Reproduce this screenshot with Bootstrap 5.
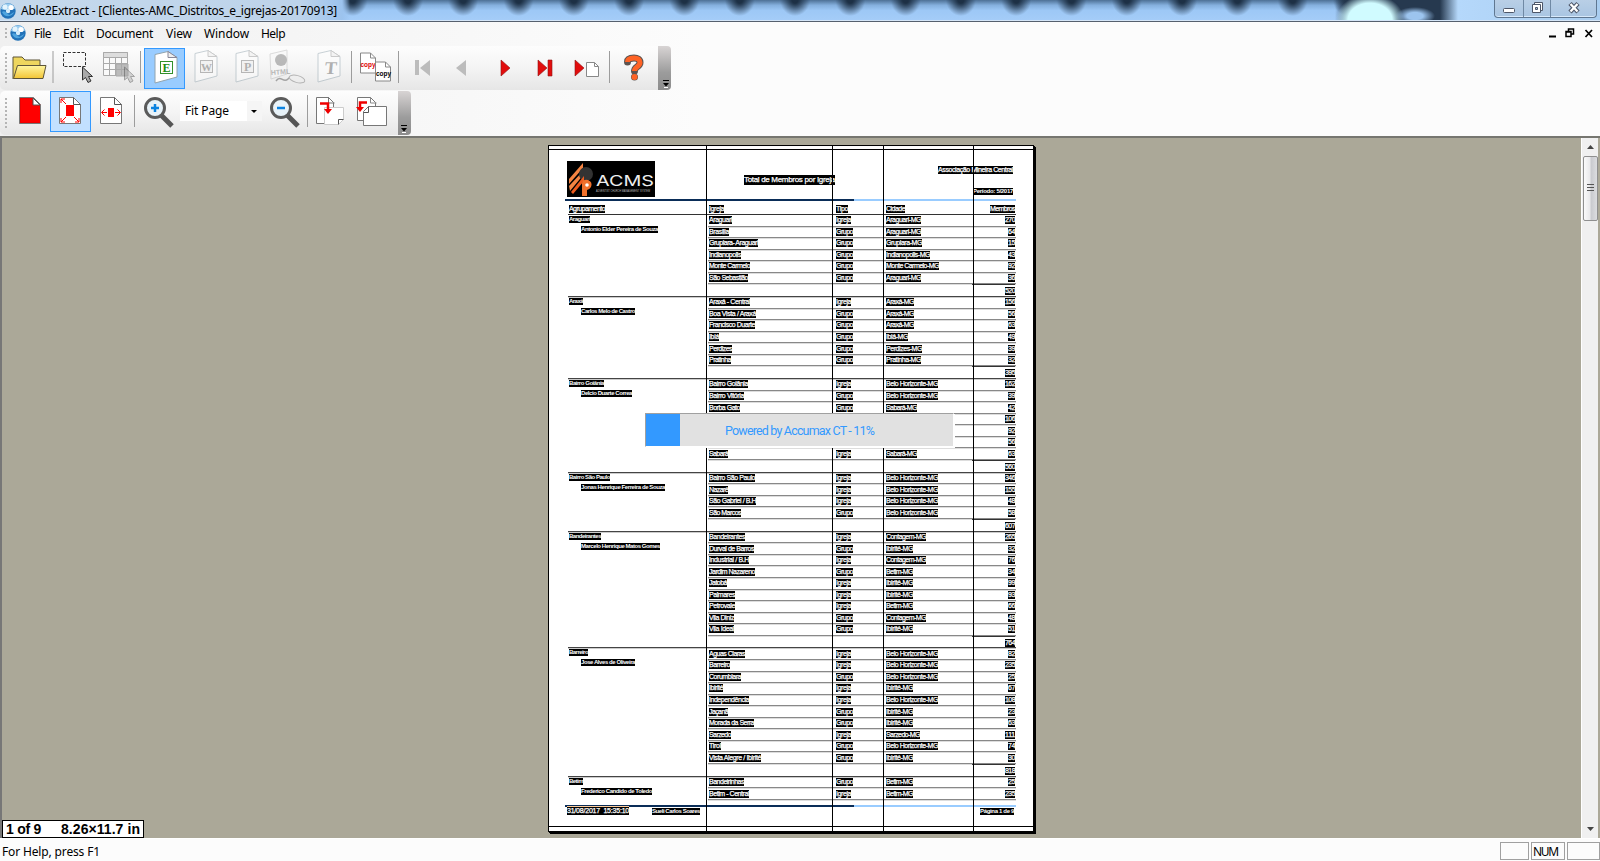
<!DOCTYPE html>
<html lang="en">
<head>
<meta charset="utf-8">
<title>Able2Extract</title>
<link href="https://cdn.jsdelivr.net/npm/bootstrap@5.3.0/dist/css/bootstrap.min.css" rel="stylesheet">
<style>
html,body{height:100%;overflow:hidden}
body{font-family:"Noto Sans","Open Sans",sans-serif;font-size:12px;line-height:1;color:#000;background:#fcfcfc}
[data-w]{display:inline-block;white-space:pre}
svg{display:block;flex:none}
.titlebar{height:22px;border-bottom:1px solid #56606e;box-shadow:inset 0 -1px #d5e6f8;
 background:
 radial-gradient(ellipse 20px 9px at 1415px 16px,#9cc4ee 40%,transparent 100%),
 radial-gradient(ellipse 34px 26px at 1370px 20px,#d0fbff 65%,transparent 100%),
 linear-gradient(90deg,#c5d9ec 0,#bdd3ea 300px,#9cc3ee 342px,transparent 350px,transparent 1335px,#26394f 1350px,#26394f 1440px,#b5d8fb 1458px,#a9cdf0 1600px),
 radial-gradient(ellipse 15px 16px at 50% 0,#1d3045 20%,#1d304500 100%) 325px 0/55.3px 20px repeat-x,
 linear-gradient(#4d7095,#85b0de 25%,#9dc8f6 50%,#a5cdf8)}
.winbtns{width:103px;height:18px;border:1px solid #5f7791;border-top:0;border-radius:0 0 4px 4px;box-shadow:inset 0 -1px #d8e9fa;background:linear-gradient(#b9cfe6,#a9c5e2)}
.winbtns>div+div{border-left:1px solid #7089a4}
.menubar{height:24px}
.chrome-bg{background:linear-gradient(90deg,#f0f0f0,#fcfcfc 700px)}
.grip{width:2px;height:30px;background:repeating-linear-gradient(#b5b5b5 0 2px,transparent 2px 4px)}
.tbar{height:44px;background:linear-gradient(#fdfdfd,#f4f4f4 50%,#e6e6e6);border-radius:5px 0 0 5px}
.tail{width:13px;height:44px;background:linear-gradient(#d8d4d4,#9c9c9c 60%,#8c8c8c);border-radius:0 4px 4px 0}
.tbtn{width:41px;height:41px}
.on1{background:#99ccff;border:1px solid #3399ff}
.on2{background:#c2e0ff;border:1px solid #3399ff}
.combo{width:82px;height:20px;background:#fff}
.combo .drop{width:15px;height:20px;background:#f5f5f5}
.work{height:702px;background:#aba898;border-top:2px solid #767670;border-left:2px solid #777}
.vscroll{width:17px;background:#f0f0f0;border-left:1px solid #fff;margin-right:2px}
.thumb{width:15px;height:65px;border:1px solid #8f8f8f;border-radius:2px;background:linear-gradient(90deg,#fafafa,#e9e9eb 45%,#c9cacf 55%,#dcdde0)}
.pageinfo{left:0;bottom:0;width:142px;height:18px;background:#fff;border:1px solid #000;font:bold 14px/16px "Liberation Sans",sans-serif;padding:0 3px 0 3px}
.sheet{width:486px;height:687px;margin:7px 0 0 546px;background:#fff;border:1px solid #000;box-shadow:1px 1px #000,2px 2px #000;font-family:"Liberation Sans",sans-serif;font-size:6px}
.guide{top:0;width:1px;height:685px;background:#000}
.hl{background:#000;color:#fff;font-size:7px;line-height:8px;height:8px;overflow:hidden;vertical-align:top;-webkit-text-stroke:.25px #fff}
.hb{font-weight:bold;font-size:6px;line-height:7px;height:7px;-webkit-text-stroke:0}
.sheet-in{border-top:1px solid #000;border-bottom:1px solid #000;height:678px;margin-top:3px}
.hdr{height:49px}
.band{height:2px;width:451px;margin-left:16px;background:linear-gradient(90deg,#0a2d58 289px,#99ccff 289px)}
.cols{display:grid;grid-template-columns:140px 127px 50px 90px 39px;padding-left:1px;margin-left:19px;width:448px;height:14px;padding-top:4px;border-bottom:1px solid #333}
.sec{border-bottom:1px solid #444;box-shadow:0 1px #ccc;width:448px;margin-left:19px;display:grid;grid-template-columns:140px 308px}
.rw{display:grid;grid-template-columns:127px 50px 89px 40px;padding-left:1px;height:11.55px;border-bottom:1px solid #888;box-shadow:0 1px #ddd;padding-top:1.300px}
.tot{height:11.8px;width:43px;margin-left:264px;border-top:1px solid #333;padding:2px 0 0}
.prog{left:643px;top:275px;width:309px;height:34px;background:#e1e1e1;border:1px solid #a0a0a0;border-right-color:#fff;border-bottom-color:#fff;box-shadow:1px 1px #fff}
.prog .bar{width:34px;background:#3399ff}
.prog .cap{color:#3399ff;font:12.5px Roboto,sans-serif}
.status{height:21px;padding-top:3px;border-top:1px solid #fff}
.pane{height:18px;border:1px solid #a0a0a0;margin-right:2px}
</style>
</head>
<body>
<div class="titlebar d-flex align-items-start">
 <svg width="16" height="16" style="margin-top:3px" viewBox="0 0 16 16"><use href="#globe"/></svg>
 <span data-w="316" style="margin:5px 0 0 5px">Able2Extract - [Clientes-AMC_Distritos_e_igrejas-20170913]</span>
 <div class="winbtns d-flex ms-auto" style="margin-right:3px">
  <div class="d-flex justify-content-center" style="width:28px"><svg width="12" height="16"><rect x=".5" y="8.500" width="11" height="4" rx="1" fill="#fff" stroke="#4d5668"/></svg></div>
  <div class="d-flex justify-content-center" style="width:27px"><svg width="13" height="16"><path d="M3.500 2.500h8v8h-8z" fill="#fff" stroke="#4d5668"/><path d="M1.500 4.500h8v8h-8z" fill="#fff" stroke="#4d5668"/><path d="M4.500 7.500h2v2h-2z" fill="#a9c5e2" stroke="#4d5668"/></svg></div>
  <div class="d-flex justify-content-center flex-fill"><svg width="12" height="16"><path d="M2 3.500l8 8.500M10 3.500L2 12" stroke="#4d5668" stroke-width="4.500"/><path d="M2.500 4l7 7.500M9.500 4l-7 7.500" stroke="#fff" stroke-width="2.300"/></svg></div>
 </div>
</div>
<div class="chrome-bg">
<nav class="menubar d-flex align-items-center">
 <div class="grip" style="height:12px;margin:0 3px 0 5px"></div>
 <svg width="16" height="16" viewBox="0 0 16 16" style="margin-top:-3px"><defs><g id="globe"><circle cx="8" cy="8" r="7.700" fill="#2272b8"/><path d="M1 6C2 2 5 .5 8 .5s6 1.500 7 5C12 7 5 8 1 6z" fill="#9bcdf0"/><circle cx="5" cy="4" r="2.500" fill="#e4f4fd"/><circle cx="11" cy="4.500" r="2.600" fill="#fff"/><circle cx="8" cy="8" r="2.200" fill="#d4ecfa"/><path d="M2 9c2-2 4 0 6 2s4-1 6-2c-1 5-10 6-12 0" fill="#4fa5df"/></g></defs><use href="#globe"/></svg>
 <span data-w="17" style="margin-left:8px">File</span><span data-w="21" style="margin-left:12px">Edit</span><span data-w="57" style="margin-left:12px">Document</span><span data-w="26" style="margin-left:13px">View</span><span data-w="45" style="margin-left:12px">Window</span><span data-w="24" style="margin-left:12px">Help</span>
 <svg width="46" height="12" class="ms-auto" style="margin:-3px 6px 0 0"><path d="M1 9.500h7" stroke="#000" stroke-width="2"/><path d="M18 4.500h5v5h-5zM18 5h5M20.500 4V2h5v5H23M20 2h6" fill="none" stroke="#000" stroke-width="1.500"/><path d="M37.500 3l6.500 7m0-7l-6.500 7" stroke="#000" stroke-width="1.700"/></svg>
</nav>
<div class="d-flex mb-1" style="height:44px">
 <div class="tbar d-flex align-items-center" style="width:658px">
  <div class="grip" style="margin-left:5px"></div>
  <svg width="146" height="40" style="margin-left:5px" viewBox="12 48 146 40">
   <defs><linearGradient id="y" x2="0" y2="1"><stop stop-color="#fff6a0"/><stop offset="1" stop-color="#f3c535"/></linearGradient></defs>
   <path d="M13 79V57h9l3 3h15v5" fill="#eed65e" stroke="#5c5439"/><path d="M13.500 78.500l4-13H46l-3 13z" fill="url(#y)" stroke="#5c5439"/>
   <path d="M53 51v32" stroke="#9c9c9c"/>
   <rect x="63.500" y="52.500" width="22" height="14" fill="none" stroke="#333" stroke-dasharray="3 1.500"/>
   <path id="cur" d="M82.500 67v13l3-2.500 2.500 5 3-1.500-2.500-4.500h4z" fill="#a9a9a9" stroke="#333"/>
   <g fill="#fafafa" stroke="#aaa"><path d="M103.500 52.500h24v23h-24z"/><path d="M103.500 52.500h24v5h-24z" fill="#ddd"/><path d="M116 64h12v12h-12z" fill="#bbb"/><path d="M103 63.500h24M103 69.500h24M109.500 58v17M115.500 58v17M121.500 58v17"/></g>
   <use href="#cur" x="42" opacity=".4"/><path d="M140.500 51v32" stroke="#9c9c9c"/>
  </svg>
  <div class="tbtn on1" style="margin-left:-14px"><svg width="39" height="39" viewBox="145 48 39 39"><path id="doc" d="M155 53.500l13-3 9 6v19.500l-22 6z" fill="#fff" stroke="#92a4ae"/><path d="M168 50.500v6h9z" fill="#eee" stroke="#889"/><rect x="160.500" y="60.500" width="12" height="12" fill="#fff" stroke="#33902a"/><text x="162.500" y="71" font-family="Liberation Serif" font-size="12" font-weight="bold" fill="#208c10">E</text></svg></div>
  <svg width="170" height="40" viewBox="185 48 170 40">
   <g opacity=".48"><g transform="translate(40 0)"><use href="#doc"/><path d="M168 50.500v6h9z" fill="#eee" stroke="#999"/></g><rect x="200.500" y="60.500" width="12" height="12" fill="#eee" stroke="#777"/><text x="201" y="71" font-family="Liberation Serif" font-size="11" font-weight="bold" fill="#666">W</text>
   <g transform="translate(81 0)"><use href="#doc"/><path d="M168 50.500v6h9z" fill="#eee" stroke="#999"/></g><rect x="241.500" y="60.500" width="12" height="12" fill="#eee" stroke="#777"/><text x="244" y="71" font-family="Liberation Serif" font-size="12" font-weight="bold" fill="#666">P</text>
   <path d="M270 54l17-4v24l-16 5z" fill="#f8f8f8" stroke="#bbb"/><circle cx="281" cy="60" r="6" fill="#777"/><text x="271" y="75" font-family="Liberation Sans" font-size="7" font-weight="bold" fill="#777" transform="rotate(-4 271 75)">HTML</text><path d="M276 81c5-7 7 3 12-2s6-3 5 0" fill="none" stroke="#555" stroke-width="1.500"/><ellipse cx="297" cy="79" rx="8" ry="3.500" fill="#eee" stroke="#777" transform="rotate(15 297 79)"/>
   <g transform="translate(163 0)"><use href="#doc"/><path d="M168 50.500v6h9z" fill="#eee" stroke="#999"/></g><text x="324" y="74" font-family="Liberation Serif" font-size="18" font-weight="bold" fill="#666" transform="skewX(-6) translate(8 0)">T</text></g>
   <path d="M351.500 51v32" stroke="#9c9c9c"/>
  </svg>
  <svg width="303" height="40" viewBox="355 48 303 40">
   <path d="M360.500 53v20h15V58l-5-5z" fill="#fff" stroke="#888"/><path d="M370.500 53v5h5" fill="none" stroke="#888"/><text x="360.500" y="67" font-family="Liberation Sans" font-size="8" font-weight="bold" fill="#d00" textLength="15" lengthAdjust="spacingAndGlyphs">copy</text>
   <path d="M375.500 62v19h15V67l-5-5z" fill="#fff" stroke="#888"/><path d="M385.500 62v5h5" fill="none" stroke="#888"/><text x="376" y="76" font-family="Liberation Sans" font-size="8" font-weight="bold" textLength="15" lengthAdjust="spacingAndGlyphs">copy</text>
   <path d="M398.500 51v32M609.500 51v32" stroke="#9c9c9c"/>
   <path d="M415 60h4v15h-4zM430 60v16l-10-8z" fill="#bcbcbc"/><path d="M466 60v16l-10-8z" fill="#bcbcbc"/>
   <g fill="#e20d0d" stroke="#8d1414" stroke-width=".6"><path d="M501 60v16l9-8zM538 60v16l9-8zM548 60h4v16h-4zM575 60v16l9-8z"/></g>
   <path d="M586.500 62.500h8l4 4v10h-12z" fill="#fff" stroke="#888"/><path d="M594.500 62.500v4h4" fill="none" stroke="#888"/>
   <path d="M627.500 62c0-3 3-4 6.500-4s6 1.500 6 4.500c0 4.500-5.500 4-5.500 8.500M634.500 77v.1" fill="none" stroke="#5c5350" stroke-width="7" stroke-linecap="round"/><path d="M627.500 62c0-3 3-4 6.500-4s6 1.500 6 4.500c0 4.500-5.500 4-5.500 8.500" fill="none" stroke="#ff6325" stroke-width="5"/><circle cx="634.500" cy="77" r="3" fill="#ff6325"/>
  </svg>
 </div>
 <div class="tail"><svg width="13" height="44"><path d="M5 34.500h6" stroke="#000"/><path d="M5 37h6l-3 3.500z"/><path d="M6 41.500h4" stroke="#fff"/></svg></div>
</div>
<div class="d-flex" style="height:46px;margin-top:-4px;padding-top:1px">
 <div class="tbar d-flex align-items-start" style="width:398px">
  <div class="grip" style="margin:7px 0 0 5px"></div>
  <svg width="43" height="41" viewBox="7 92 43 41"><path d="M19.500 98.500h14l7 7v19h-21z" fill="#e00" stroke="#777"/><path d="M21 100h11v6h8v17H21z" fill="#f00"/><path d="M33 99v7h7z" fill="#fff" stroke="#555"/></svg>
  <div class="tbtn on2"><svg width="39" height="39" viewBox="51 93 39 39"><path d="M59.500 98.500h14l7 7v19h-21z" fill="#fff" stroke="#777"/><path d="M73.500 98.500v7h7" fill="none" stroke="#555"/><path d="M66 106h8v11h-8z" fill="#f00"/><path d="M66 105l-5-5m0 4v-4h4M74 118l5 5m0-4v4h-4M66 118l-5 5m0-4v4h4" stroke="#f00" fill="none"/></svg></div>
  <svg width="89" height="41" viewBox="91 92 89 41"><path d="M100.500 98.500h14l7 7v19h-21z" fill="#fff" stroke="#777"/><path d="M114.500 98.500v7h7" fill="none" stroke="#555"/><path d="M108 109h6v9h-6z" fill="#f00"/><path d="M107 113.500h-5m2.500-3l-3 3 3 3M115 113.500h5m-2.500-3l3 3-3 3" stroke="#f00" fill="none"/><path d="M134.500 96v32" stroke="#9c9c9c"/><g id="mag"><path d="M161 116l11 11" stroke="#555" stroke-width="5"/><circle cx="155" cy="109" r="9.500" fill="#e8f2f8" stroke="#5a5a5a" stroke-width="3"/><path d="M151 109h8" stroke="#0a82e0" stroke-width="2.500"/></g><path d="M155 105v8" stroke="#0a82e0" stroke-width="2.500"/></svg>
  <div class="combo d-flex align-items-center" style="margin-top:10px"><span data-w="44" style="margin-left:5px">Fit Page</span><div class="drop ms-auto"><svg width="15" height="20"><path d="M4 9h6l-3 3z"/></svg></div></div>
  <svg width="134" height="41" viewBox="262 92 134 41"><use href="#mag" x="126"/><path d="M307.500 96v32" stroke="#9c9c9c"/>
   <path d="M316.500 98.500h12l5 5v21h-17z" fill="#fff" stroke="#777"/><path d="M328.500 98v6h6" fill="none" stroke="#777"/><path d="M324.500 108.500h19v12l-5 5h-14z" fill="#fff" stroke="#ccc"/><path d="M338.500 125.500v-5h5" fill="none" stroke="#555"/><path d="M320 104.500h8v6" stroke="#e00" stroke-width="2.500" fill="none"/><path d="M324 110h8l-4 5z" fill="#e00"/>
   <path d="M357.500 98.500h13l5 5v18h-18z" fill="#fff" stroke="#777"/><path d="M370.500 98v6h6" fill="none" stroke="#888"/><path d="M368.500 107.500h18v19h-23v-14z" fill="#fff" stroke="#777"/><path d="M368.500 107.500v6h-5" fill="none" stroke="#555"/><path d="M367 103.500h-7v6" stroke="#e00" stroke-width="2.500" fill="none"/><path d="M356 108h8l-4 5z" fill="#e00"/></svg>
 </div>
 <div class="tail"><svg width="13" height="44"><path d="M3 34.500h6" stroke="#000"/><path d="M3 37h6l-3 3.500z"/><path d="M4 41.500h4" stroke="#fff"/></svg></div>
</div>
</div>
<main class="work d-flex position-relative">
 <div class="sheet position-relative">
  <div class="sheet-in">
   <div class="hdr d-flex align-items-start">
    <svg width="88" height="36" style="margin:11px 0 0 18px" viewBox="0 0 88 36"><path d="M0 0h88v36H0z"/><path d="M2 18L16 2v5L2 23zM2 25L17 9v4L3 30z" fill="#f58442"/><circle cx="19" cy="13" r="7" fill="#333"/><path d="M4 31L17 15v5L6 33z" fill="#ee5b1e"/><path d="M15 35V22q1-4 6-3 5 2 3 7-2 3-4 3v6z" fill="#f0712c"/><circle cx="20" cy="24" r="1.800" fill="#fff"/><text x="29" y="25" font-family="Inter" font-size="15" fill="#eee" textLength="58" lengthAdjust="spacingAndGlyphs">ACMS</text><text x="29" y="30.500" font-family="Liberation Sans" font-size="2.800" fill="#bbb" textLength="54" lengthAdjust="spacingAndGlyphs">ADVENTIST CHURCH MANAGEMENT SYSTEM</text></svg>
    <span class="hl" data-w="91" style="margin:25px 0 0 89px;font-size:8px;line-height:10px;height:10px">Total de Membros por Igreja</span>
    <div class="text-end ms-auto" style="margin:16px 20px 0 0"><span class="hl d-block ms-auto" data-w="75">Associação Mineira Central</span><span class="hl hb ms-auto" data-w="40" style="margin-top:14px">Período: 5/2017</span></div>
   </div>
   <div class="band"></div>
   <div class="cols" id="heads"></div>
   <div id="secs"></div>
   <div class="band" style="margin-top:5px"></div>
   <div class="d-flex" style="margin:0 19px 0 18px"><span class="hl" data-w="62" style="box-shadow:0 -1px #ffcc99">31/08/2017  15:35:10</span><span class="hl hb" data-w="48" style="margin:1px 0 0 23px">Sueli Carlos Soares</span><span class="hl hb ms-auto" data-w="34" style="margin-top:1px">Página 1 de 9</span></div>
  </div>
  <div class="guide position-absolute" style="left:157px"></div><div class="guide position-absolute" style="left:283px"></div><div class="guide position-absolute" style="left:334px"></div><div class="guide position-absolute" style="left:424px"></div>
 </div>
 <div class="prog position-absolute d-flex"><div class="bar"></div><div class="cap flex-fill d-flex align-items-center" style="padding-left:45px"><span data-w="149">Powered by Accumax CT - 11%</span></div></div>
 <div class="pageinfo position-absolute d-flex justify-content-between"><span data-w="35">1 of 9</span><span data-w="79">8.26×11.7 in</span></div>
 <div class="vscroll ms-auto d-flex flex-column align-items-center">
  <svg width="15" height="18"><path d="M4 11l3.500-4 3.500 4z" fill="#444"/></svg>
  <div class="thumb"><svg width="13" height="63"><path d="M3 27.500h7M3 30.500h7M3 33.500h7" stroke="#555"/></svg></div>
  <svg width="15" height="18" class="mt-auto"><path d="M4 7h7l-3.500 4z" fill="#444"/></svg>
 </div>
</main>
<footer class="status d-flex"><span data-w="98" style="margin:4px 0 0 2px">For Help, press F1</span>
 <div class="pane ms-auto" style="width:29px"></div><div class="pane" style="width:34px;padding:3px 0 0 1px"><span data-w="25">NUM</span></div><div class="pane me-0" style="width:33px"></div></footer>
<script src="https://cdn.jsdelivr.net/npm/bootstrap@5.3.0/dist/js/bootstrap.bundle.min.js"></script>
<script>
// Highlight widths, in pixels, of the city column
const cityW={Araguari:35,Grupiara:36,'Indianopolis':44,'Monte Carmelo':53,'Araxá':28,'Ibiá':22,Perdizes:36,Pratinha:35,'Belo Horizonte':52,'Sabará':31,Contagem:40,'Ibirité':27,Betim:27,Sarzedo:34};
// group, width, pastor, width, rows (church:width:type:city:members), total
const data=[
['Araguari',21,'Antonio Elder Pereira de Souza',77,'Araguari:23:I:Araguari:270|Brasilia:20:G:Araguari:64|Grupiara- Araguari:49:G:Grupiara:15|Indianopolis:32:G:Indianopolis:43|Monte Carmelo:41:G:Monte Carmelo:92|São Sebastião:39:G:Araguari:36',520],
['Araxá',14,'Carlos Melo de Castro',54,'Araxá - Central:41:I:Araxá:156|Boa Vista / Araxá:47:G:Araxá:56|Francisco Duarte:46:G:Araxá:63|Ibiá:10:G:Ibiá:49|Perdizes:23:G:Perdizes:39|Pratinha:22:G:Pratinha:32',395],
['Bairro Goiânia',35,'Delcio Duarte Correa',51,'Bairro Goiânia:39:I:Belo Horizonte:162|Bairro Vitória:35:G:Belo Horizonte:39|Borba Gato:31:G:Sabará:42|::::106|::::92|::::56|Sabará:19:I:Sabará:63',560],
['Bairro São Paulo',41,'Jonas Henrique Ferreira de Souza',84,'Bairro São Paulo:46:I:Belo Horizonte:346|Nazaré:19:I:Belo Horizonte:155|São Gabriel / B.H:47:I:Belo Horizonte:48|São Marcos:32:G:Belo Horizonte:58',607],
['Bandeirantes',32,'Marcelo Henrique Matos Gomes',79,'Bandeirantes:36:I:Contagem:265|Durval de Barros:45:G:Ibirité:32|Industrial / B.H:40:I:Contagem:76|Jardim Nazareno:46:G:Betim:34|Jatobá:18:I:Ibirité:99|Palmares:26:I:Ibirité:93|Petrovale:26:I:Betim:66|Vila Diniz:25:G:Contagem:48|Vila Ideal:25:G:Ibirité:51',764],
['Barreiro',19,'Jose Alves de Oliveira',54,'Aguas Claras:36:I:Belo Horizonte:82|Barreiro:21:I:Belo Horizonte:235|Corumbiara:32:G:Belo Horizonte:25|Ibirité:14:I:Ibirité:67|Independência:40:I:Belo Horizonte:108|Jaçanã:19:G:Ibirité:23|Morada da Serra:45:G:Ibirité:63|Sarzedo:22:I:Sarzedo:111|Tirol:12:G:Belo Horizonte:74|Vista Alegre / Ibirité:52:G:Ibirité:30',818],
['Betim',14,'Frederico Candido de Toledo',71,'Bandeirinhas:35:G:Betim:25|Betim - Central:40:I:Betim:235',0]];
const hl=(t,w,c='')=>t?`<span class="hl ${c}" data-w="${w}">${t}</span>`:'';
const num=n=>hl(''+n,n>99?10:7);
heads.innerHTML=`<div>${hl('Agrupamento',36)}</div><div>${hl('Igreja',15)}</div><div>${hl('Tipo',12)}</div><div>${hl('Cidade',19)}</div><div class="text-end">${hl('Membros',25)}</div>`;
secs.innerHTML=data.map(([g,gw,p,pw,rows,tot])=>`<div class="sec"${tot?'':' style="border:0;box-shadow:none"'}><div style="padding:1px 0 0 1px">${hl(g,gw,'hb')}<div style="padding:3px 0 0 12px">${hl(p,pw,'hb')}</div></div><div>${rows.split('|').map(r=>{const[n,w,t,c,m]=r.split(':');
return`<div class="rw"><div>${hl(n,w)}</div><div>${t?hl(t=='I'?'Igreja':'Grupo',t=='I'?15:17):''}</div><div>${c?hl(c+'-MG',cityW[c]):''}</div><div class="text-end">${num(m)}</div></div>`}).join('')}${tot?`<div class="tot text-end">${num(tot)}</div>`:''}</div></div>`).join('');
// Fit each label to its width by adjusting the tracking
document.querySelectorAll('[data-w]').forEach(e=>{const w=+e.dataset.w,n=e.getBoundingClientRect().width,k=[...e.textContent].length;e.style.letterSpacing=(w-n)/k+'px';e.style.width=w+'px'});
</script>
</body>
</html>
